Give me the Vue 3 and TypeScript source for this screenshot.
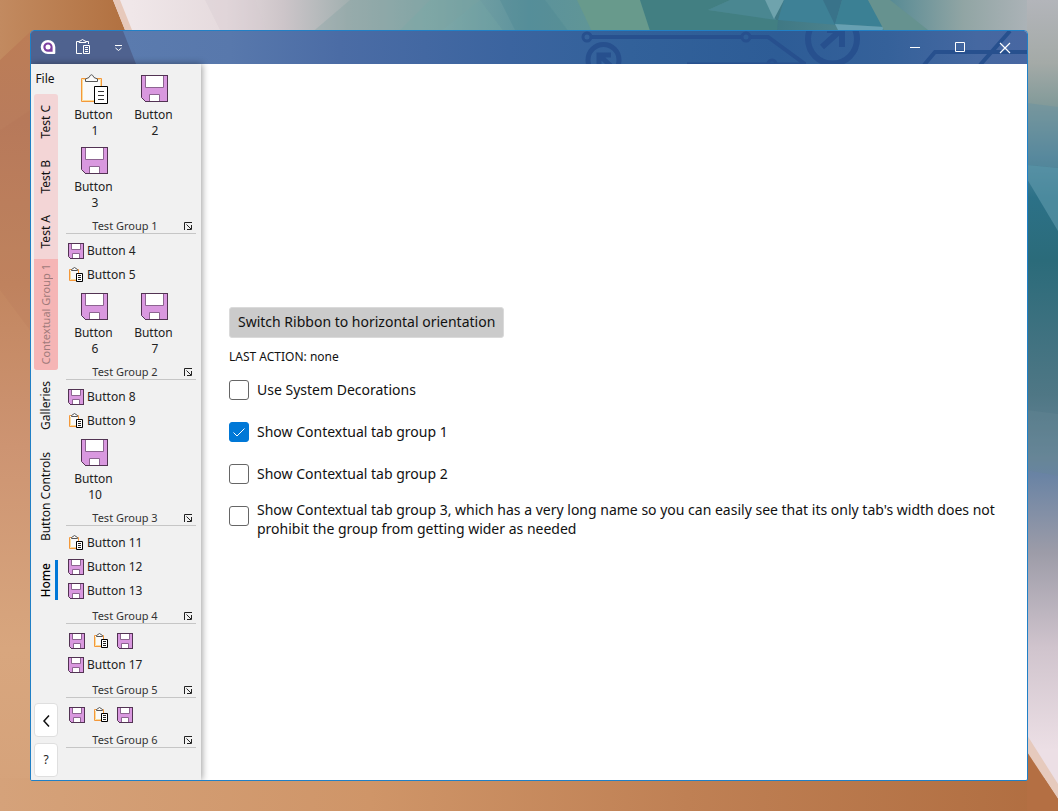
<script setup lang="ts">
import { ref } from 'vue'

type Kind = 'save' | 'paste'
interface RibbonButton { label: string; icon: Kind }
interface Row { size: 'large' | 'small' | 'icon'; buttons: RibbonButton[] }
interface Group { title: string; rows: Row[] }

const b = (n: number, icon: Kind = 'save'): RibbonButton => ({ label: `Button ${n}`, icon })

const groups: Group[] = [
  { title: 'Test Group 1', rows: [{ size: 'large', buttons: [b(1, 'paste'), b(2), b(3)] }] },
  {
    title: 'Test Group 2',
    rows: [
      { size: 'small', buttons: [b(4), b(5, 'paste')] },
      { size: 'large', buttons: [b(6), b(7)] },
    ],
  },
  {
    title: 'Test Group 3',
    rows: [
      { size: 'small', buttons: [b(8), b(9, 'paste')] },
      { size: 'large', buttons: [b(10)] },
    ],
  },
  { title: 'Test Group 4', rows: [{ size: 'small', buttons: [b(11, 'paste'), b(12), b(13)] }] },
  {
    title: 'Test Group 5',
    rows: [
      { size: 'icon', buttons: [b(14), b(15, 'paste'), b(16)] },
      { size: 'small', buttons: [b(17)] },
    ],
  },
  { title: 'Test Group 6', rows: [{ size: 'icon', buttons: [b(18), b(19, 'paste'), b(20)] }] },
]

const contextTabs = ['Test C', 'Test B', 'Test A']
const tabs = ['Galleries', 'Button Controls', 'Home']
const activeTab = ref('Home')
const lastAction = ref('none')

const options = ref([
  { id: 'decorations', label: 'Use System Decorations', checked: false },
  { id: 'group1', label: 'Show Contextual tab group 1', checked: true },
  { id: 'group2', label: 'Show Contextual tab group 2', checked: false },
  {
    id: 'group3',
    label:
      "Show Contextual tab group 3, which has a very long name so you can easily see that its only tab's width does not prohibit the group from getting wider as needed",
    checked: false,
  },
])

const stacked = (label: string) => label.replace(' ', ' \n')
</script>

<template>
  <div class="desktop">
    <svg class="wallpaper" viewBox="0 0 1058 811" preserveAspectRatio="none" aria-hidden="true">
      <defs>
        <linearGradient id="sand" x1="0" y1="0" x2="0" y2="1">
          <stop offset="0" stop-color="#bd7d54" />
          <stop offset="0.15" stop-color="#b97c5c" />
          <stop offset="0.35" stop-color="#c28660" />
          <stop offset="0.55" stop-color="#cd9472" />
          <stop offset="0.8" stop-color="#d8a67e" />
          <stop offset="1" stop-color="#d5a27a" />
        </linearGradient>
        <linearGradient id="crest" x1="0" y1="0" x2="1" y2="0">
          <stop offset="0" stop-color="#c28a60" />
          <stop offset="1" stop-color="#b1703f" />
        </linearGradient>
        <linearGradient id="floor" x1="0" y1="0" x2="1" y2="0">
          <stop offset="0" stop-color="#d5a27a" />
          <stop offset="0.35" stop-color="#cf9568" />
          <stop offset="0.65" stop-color="#bf8054" />
          <stop offset="1" stop-color="#b06d40" />
        </linearGradient>
        <linearGradient id="sky" x1="0" y1="0" x2="1" y2="0">
          <stop offset="0.02" stop-color="#f0e7e9" />
          <stop offset="0.12" stop-color="#e5dadd" />
          <stop offset="0.18" stop-color="#cdc5c9" />
          <stop offset="0.25" stop-color="#a2b0b0" />
          <stop offset="0.34" stop-color="#82a8a8" />
          <stop offset="0.44" stop-color="#5b929c" />
          <stop offset="0.56" stop-color="#649892" />
          <stop offset="0.7" stop-color="#3f7884" />
          <stop offset="0.82" stop-color="#568a94" />
          <stop offset="0.9" stop-color="#91a5a4" />
          <stop offset="1" stop-color="#b8b9c0" />
        </linearGradient>
        <linearGradient id="east" x1="0" y1="0" x2="0" y2="1">
          <stop offset="0" stop-color="#b3b5ba" />
          <stop offset="0.08" stop-color="#a4aaa7" />
          <stop offset="0.13" stop-color="#849b9a" />
          <stop offset="0.2" stop-color="#4d8399" />
          <stop offset="0.25" stop-color="#2c7187" />
          <stop offset="0.33" stop-color="#2b6b7a" />
          <stop offset="0.5" stop-color="#4f7785" />
          <stop offset="0.58" stop-color="#678598" />
          <stop offset="0.6" stop-color="#6983a4" />
          <stop offset="0.7" stop-color="#9d9ca8" />
          <stop offset="0.82" stop-color="#d0c4cd" />
          <stop offset="0.95" stop-color="#ecdfe5" />
        </linearGradient>
      </defs>
      <rect width="1058" height="811" fill="url(#sand)" />
      <rect y="778" width="1058" height="33" fill="url(#floor)" />
      <polygon points="0,0 130,0 130,32 30,32 0,60" fill="url(#crest)" />
      <polygon points="0,130 30,110 30,330 0,290" fill="#a96c50" opacity="0.12" />
      <polygon points="113,0 1058,0 1058,40 129,40" fill="url(#sky)" />
      <polygon points="113,0 120,0 136,40 129,40" fill="#e7c9bb" />
      <polygon points="205,0 255,0 270,40 225,40" fill="#d8ccd0" opacity="0.35" />
      <polygon points="350,0 303,40 430,40 480,0" fill="#7d9f9e" opacity="0.3" />
      <polygon points="430,0 480,0 510,40 390,40" fill="#78aaa6" opacity="0.3" />
      <polygon points="500,0 545,0 575,40 520,40" fill="#4a8592" opacity="0.3" />
      <polygon points="577,0 640,0 653,40 596,40" fill="#689a8c" />
      <polygon points="640,0 730,0 708,10 778,20 776,40 653,40" fill="#427f82" />
      <polygon points="730,0 765,0 776,20 708,10" fill="#4a8791" />
      <polygon points="765,0 784,0 774,19" fill="#6fa3ad" />
      <polygon points="784,0 823,0 838,25 778,20" fill="#3e8196" />
      <polygon points="823,0 842,0 835,25" fill="#39738a" />
      <polygon points="842,0 868,0 884,27 835,24" fill="#3b8094" />
      <polygon points="835,24 884,27 880,34 840,34" fill="#67a0b2" />
      <polygon points="868,0 890,0 928,30 884,30" fill="#66928f" />
      <polygon points="1027,0 1058,0 1058,790 1027,738" fill="url(#east)" />
      <polygon points="1027,103 1058,107 1058,168 1027,165" fill="#6691a2" opacity="0.4" />
      <polygon points="1027,165 1058,168 1058,231 1027,179" fill="#609bae" opacity="0.6" />
      <polygon points="1027,410 1058,414 1058,476 1027,470" fill="#688994" opacity="0.3" />
      <polygon points="1027,735 1058,784 1058,799 1027,752" fill="#e6cabd" />
      <polygon points="1027,752 1058,799 1058,811 1027,811" fill="#b46f43" />
    </svg>

    <div class="window">
      <header class="titlebar">
        <svg class="circuit" viewBox="0 0 996 33" preserveAspectRatio="xMaxYMin slice" aria-hidden="true">
          <defs>
            <linearGradient id="bar" x1="0" y1="0" x2="1" y2="0">
              <stop offset="0.09" stop-color="#5b7bae" />
              <stop offset="0.2" stop-color="#5878ac" />
              <stop offset="0.31" stop-color="#4b6ca5" />
              <stop offset="0.48" stop-color="#3b649f" />
              <stop offset="0.6" stop-color="#32619a" />
              <stop offset="0.75" stop-color="#2d5c96" />
              <stop offset="0.86" stop-color="#35619a" />
              <stop offset="0.95" stop-color="#4568a1" />
              <stop offset="1" stop-color="#4867a2" />
            </linearGradient>
          </defs>
          <rect width="996" height="33" fill="url(#bar)" />
          <polygon points="0,0 92,0 105,33 0,33" fill="#4f628f" />
          <g fill="none" stroke="#27508e" stroke-width="4">
            <path d="M560 6H711M719 6H737L774 33M656 33.500H775M893 34L904 21H996M949 34L979 0" />
            <circle cx="556" cy="6" r="4" stroke-width="3" />
            <circle cx="715" cy="6" r="4" stroke-width="3" />
            <circle cx="741" cy="33" r="4" stroke-width="3" />
            <circle cx="572.500" cy="29" r="15.500" stroke-width="5" />
            <circle cx="801.500" cy="8" r="24.500" stroke-width="6" />
            <path d="M568 36V24H580M568 24L581 36" stroke-width="5" />
            <path d="M791 16L811 -2M811 -4V16M796 -1H811" stroke-width="6" />
          </g>
        </svg>

        <div class="quick">
          <svg class="i16" viewBox="0 0 16 16" role="img" aria-label="Application">
            <path d="M8 1a7.300 7 0 1 0 0 14h6.300a1 1 0 0 0 1-1V8A7.300 7 0 0 0 8 1z" fill="#fff" />
            <path d="M8 3.400a4.700 4.700 0 1 0 0 9.400h4.600V8A4.700 4.700 0 0 0 8 3.400z" fill="#7c3fa0" />
            <circle cx="8" cy="8" r="2.500" fill="#fff" />
          </svg>
          <button class="bare" type="button" aria-label="Paste">
            <svg class="i16" viewBox="0 0 16 16" fill="none" stroke="#fff">
              <path d="M4 2.500H1.500V14.500H7M11 2.500H13.500V5" />
              <path d="M4 3.500V2.500L6 1.500Q7.500 -.5 9 1.500L11 2.500V3.500z" />
              <path d="M8.500 6.500h6v8h-6zM10 8.500h3M10 10.500h3M10 12.500h3" />
            </svg>
          </button>
          <button class="bare" type="button" aria-label="Customize Quick Access Toolbar">
            <svg class="i16" viewBox="0 0 16 16" fill="none" stroke="#fff">
              <path d="M5 6.500h7M5.500 9L8.500 11.500L11.500 9" />
            </svg>
          </button>
        </div>

        <div class="controls">
          <button type="button" aria-label="Minimize">
            <svg class="i16" viewBox="0 0 16 16"><path d="M3 8.500h10" stroke="#fff" /></svg>
          </button>
          <button type="button" aria-label="Maximize">
            <svg class="i16" viewBox="0 0 16 16"><path d="M3.500 3.500h9v9h-9z" fill="none" stroke="#fff" /></svg>
          </button>
          <button type="button" aria-label="Close">
            <svg class="i16" viewBox="0 0 16 16"><path d="M3 4l10 10M13 4l-10 10" fill="none" stroke="#fff" stroke-width="1.200" /></svg>
          </button>
        </div>
      </header>

      <div class="body">
        <aside class="ribbon">
          <nav class="rail">
            <button class="file" type="button">File</button>
            <div class="context">
              <button
                v-for="t in contextTabs"
                :key="t"
                type="button"
                class="tab"
                :class="{ active: activeTab === t }"
                @click="activeTab = t"
              >
                <span class="vert">{{ t }}</span>
              </button>
              <div class="context-title"><span class="vert">Contextual Group 1</span></div>
            </div>
            <button
              v-for="t in tabs"
              :key="t"
              type="button"
              class="tab plain"
              :class="{ active: activeTab === t }"
              @click="activeTab = t"
            >
              <span class="vert">{{ t }}</span>
            </button>
            <div class="rail-end">
              <button class="box" type="button" aria-label="Collapse ribbon">
                <svg class="i16" viewBox="0 0 16 16" fill="none" stroke="#111" stroke-width="1.500">
                  <path d="M11 3.500L6 9L11 14.500" />
                </svg>
              </button>
              <button class="box" type="button" aria-label="Help">?</button>
            </div>
          </nav>

          <div class="groups">
            <section v-for="g in groups" :key="g.title" class="group">
              <div v-for="(row, r) in g.rows" :key="r" class="row" :class="row.size">
                <button
                  v-for="item in row.buttons"
                  :key="item.label"
                  type="button"
                  :aria-label="item.label"
                  @click="lastAction = item.label"
                >
                  <template v-if="row.size === 'large'">
                    <svg v-if="item.icon === 'save'" class="i32" viewBox="0 0 32 32">
                      <path d="M2.500 2.500h26v26H6.500l-4-4z" fill="#d998df" stroke="#523353" />
                      <path d="M6.500 3v11.500h18V3" fill="#fff" stroke="#8d6491" />
                      <path d="M10.500 28v-6.500h10V28" fill="#fff" stroke="#8d6491" />
                      <path d="M2 2.500h27M6 28.500h23" stroke="#523353" />
                    </svg>
                    <svg v-else class="i32" viewBox="0 0 32 32" fill="none">
                      <path d="M3 6h19v22H3z" fill="#fafafa" />
                      <path d="M8 5.500H2.500V28.500H15M17 5.500H22.500V13" stroke="#f4983a" />
                      <path d="M8 6.500H3.500V27.500H15M17 6.500H21.500V13" stroke="#fbdc9c" />
                      <path d="M6.500 8.500V6L10 4.500Q12.500 -1 15 4.500L18.500 6V8.500z" fill="#fafafa" stroke="#555" />
                      <path d="M15.500 13.500h13v17h-13z" fill="#fff" stroke="#000" />
                      <path d="M19 18.500h6M19 22.500h6M19 26.500h6" stroke="#333" />
                    </svg>
                    <span class="two">{{ stacked(item.label) }}</span>
                  </template>
                  <template v-else>
                    <svg v-if="item.icon === 'save'" class="i16" viewBox="0 0 16 16">
                      <path d="M.5.5h15v15H2.500l-2-2z" fill="#d998df" stroke="#523353" />
                      <path d="M3.500 1v5.500h9V1" fill="#fff" stroke="#8d6491" />
                      <path d="M4.500 15v-4.500h7V15" fill="#fff" stroke="#8d6491" />
                      <path d="M0 .5h16M2 15.500h14" stroke="#523353" />
                    </svg>
                    <svg v-else class="i16" viewBox="0 0 16 16" fill="none">
                      <path d="M2 3h9v11H2z" fill="#fafafa" />
                      <path d="M4 2.500H1.500V13.500H8M9 2.500H10.500V6" stroke="#f4983a" />
                      <path d="M2.500 4V12.500H8" stroke="#fbdc9c" />
                      <path d="M3.500 3.500V2.500L5 1.500Q6.500 -.5 8 1.500L9.500 2.500V3.500z" fill="#fafafa" stroke="#555" />
                      <path d="M8.500 6.500h6v8h-6z" fill="#fff" stroke="#000" />
                      <path d="M10 8.500h3M10 10.500h3M10 12.500h3" stroke="#222" />
                    </svg>
                    <span v-if="row.size === 'small'">{{ item.label }}</span>
                  </template>
                </button>
              </div>
              <footer class="group-foot">
                <span>{{ g.title }}</span>
                <button class="launch" type="button" :aria-label="`${g.title} options`">
                  <svg viewBox="0 0 8 8" fill="none" stroke="#222">
                    <path d="M.5 8V.5H8M2.500 2.500L7 7M7.500 3V7.500H3" />
                  </svg>
                </button>
              </footer>
            </section>
          </div>
        </aside>

        <main class="content">
          <button class="switch" type="button">Switch Ribbon to horizontal orientation</button>
          <p class="status">LAST ACTION: {{ lastAction }}</p>
          <label v-for="o in options" :key="o.id" class="check" :for="o.id">
            <input :id="o.id" v-model="o.checked" type="checkbox" />
            <svg v-if="o.checked" class="tick" viewBox="0 0 20 20" aria-hidden="true">
              <path d="M4.500 10.500L8 14L15.500 6.500" fill="none" stroke="#fff" />
            </svg>
            <span>{{ o.label }}</span>
          </label>
        </main>
      </div>
    </div>
  </div>
</template>

<style>
body {
  margin: 0;
}
</style>

<style scoped>
.desktop {
  position: relative;
  display: flex;
  box-sizing: border-box;
  min-height: 100vh;
  padding: 30px;
  font-family: 'Noto Sans', 'Open Sans', sans-serif;
  font-size: 12px;
  line-height: 16px;
  color: #222;
}
.wallpaper {
  position: absolute;
  inset: 0;
  width: 100%;
  height: 100%;
}
button {
  margin: 0;
  padding: 0;
  border: 0;
  background: none;
  color: inherit;
  font: inherit;
}
svg {
  display: block;
  flex: none;
}
.i16 {
  width: 16px;
  height: 16px;
}
.i32 {
  width: 32px;
  height: 32px;
}
.window {
  position: relative;
  flex: 1;
  display: flex;
  flex-direction: column;
  min-width: 0;
  border: 1px solid #2080c6;
  border-radius: 4px 4px 2px 2px;
  background: #fff;
  overflow: hidden;
}
.titlebar {
  position: relative;
  display: flex;
  justify-content: space-between;
  box-sizing: border-box;
  height: 33px;
  padding-bottom: 1px;
}
.circuit {
  position: absolute;
  inset: 0;
  width: 100%;
  height: 100%;
}
.quick {
  position: relative;
  display: flex;
  align-items: center;
  gap: 19px;
  padding-left: 9px;
}
.controls {
  position: relative;
  display: flex;
}
.controls button {
  display: grid;
  place-items: center;
  width: 45px;
}
.body {
  flex: 1;
  display: flex;
}
.ribbon {
  position: relative;
  display: flex;
  flex: none;
  width: 170px;
  background: #f1f1f1;
  box-shadow: 1px 0 7px rgba(0, 0, 0, 0.4);
}
.rail {
  display: flex;
  flex-direction: column;
  width: 24px;
  margin: 0 7px 0 3px;
}
.file {
  height: 30px;
  padding-right: 2px;
  color: #111;
}
.context {
  border-radius: 3px;
  overflow: hidden;
  background: #f3d5d6;
}
.vert {
  writing-mode: vertical-rl;
  transform: rotate(180deg);
  white-space: nowrap;
}
.tab,
.context-title {
  position: relative;
  display: flex;
  align-items: center;
  justify-content: center;
  box-sizing: border-box;
  width: 24px;
  min-height: 55px;
  padding: 10px 0;
  color: #111;
}
.tab.plain {
  padding: 11px 0;
}
.context-title {
  padding: 5px 0;
  background: #f5b5b5;
  color: #a07a7a;
  font-size: 11px;
}
.tab.active {
  font-weight: 500;
  color: #000;
}
.tab.active::after {
  content: '';
  position: absolute;
  top: 8px;
  bottom: 8px;
  right: 0;
  width: 3px;
  background: #0078d7;
}
.rail-end {
  display: grid;
  gap: 6px;
  margin: auto 0 3px;
}
.box {
  display: grid;
  place-items: center;
  height: 34px;
  border: 1px solid #dfdfdf;
  border-radius: 4px;
  background: #fff;
}
.groups {
  flex: 1;
}
.group {
  padding-top: 4px;
}
.row {
  display: flex;
  flex-wrap: wrap;
}
.large button {
  display: flex;
  flex-direction: column;
  align-items: center;
  gap: 2px;
  width: 60px;
  height: 72px;
  padding-top: 5px;
}
.two {
  white-space: pre;
  text-align: center;
}
.small {
  flex-direction: column;
  align-items: flex-start;
}
.small button,
.icon button {
  display: flex;
  align-items: center;
  gap: 3px;
  height: 24px;
  padding: 2px 3px 0;
}
.icon button {
  padding: 2px 4px 0;
}
.group-foot {
  display: flex;
  align-items: flex-end;
  box-sizing: border-box;
  height: 22px;
  margin: 0 5px 0 1px;
  border-bottom: 1px solid #c6c6c6;
  font-size: 11px;
  line-height: 14px;
  color: #333;
}
.group-foot span {
  flex: 1;
  text-align: center;
}
.launch {
  padding: 3px 4px 3px 0;
}
.launch svg {
  width: 8px;
  height: 8px;
}
.content {
  flex: 1;
  display: flex;
  flex-direction: column;
  align-items: flex-start;
  justify-content: center;
  gap: 10px;
  min-width: 0;
  padding: 0 20px 0 28px;
  color: #111;
}
.switch {
  height: 31px;
  padding: 0 8px;
  border: 1px solid #dadada;
  border-radius: 3px;
  background: #cbcbcb;
  font-size: 14px;
}
.status {
  height: 16px;
  margin: 0;
  line-height: 18px;
}
.check {
  display: grid;
  grid-template-columns: 20px 1fr;
  column-gap: 8px;
  align-items: center;
  min-height: 32px;
  font-size: 14px;
  line-height: 19px;
}
.check input {
  grid-area: 1 / 1;
  align-self: start;
  appearance: none;
  box-sizing: border-box;
  width: 20px;
  height: 20px;
  margin: 6px 0 0;
  border: 1px solid #666;
  border-radius: 3px;
  background: #fff;
}
.check input:checked {
  border-color: #0078d7;
  background: #0078d7;
}
.tick {
  grid-area: 1 / 1;
  align-self: start;
  width: 20px;
  height: 20px;
  margin-top: 6px;
  z-index: 1;
  pointer-events: none;
}
.check span {
  grid-area: 1 / 2;
}
</style>
